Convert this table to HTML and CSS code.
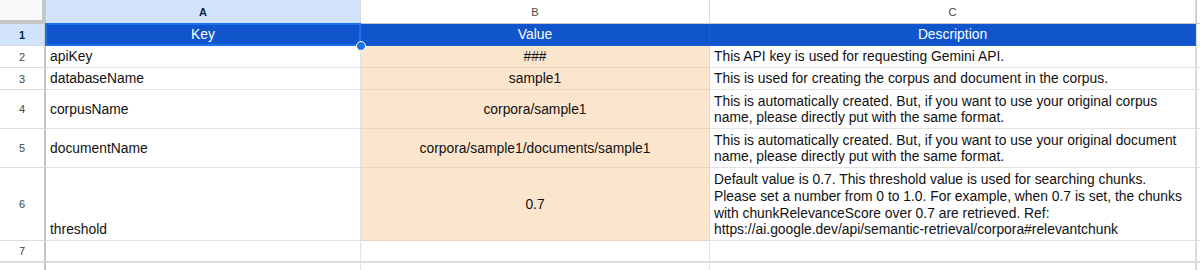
FILE: index.html
```html
<!DOCTYPE html>
<html>
<head>
<meta charset="utf-8">
<link rel="stylesheet" href="styles.css">
</head>
<body>
<div class="sheet">
  <div class="corner"></div>
  <div class="colhead sel">A</div>
  <div class="colhead">B</div>
  <div class="colhead">C</div>
  <div class="colhead edge"></div>

  <div class="rowhead sel">1</div>
  <div class="cell hdr a1">Key<span class="selbox"></span><span class="handle"></span></div>
  <div class="cell hdr">Value</div>
  <div class="cell hdr">Description</div>
  <div class="cell edge"></div>

  <div class="rowhead">2</div>
  <div class="cell mid">apiKey</div>
  <div class="cell val">###</div>
  <div class="cell">This API key is used for requesting Gemini API.</div>
  <div class="cell edge"></div>

  <div class="rowhead">3</div>
  <div class="cell mid">databaseName</div>
  <div class="cell val">sample1</div>
  <div class="cell">This is used for creating the corpus and document in the corpus.</div>
  <div class="cell edge"></div>

  <div class="rowhead">4</div>
  <div class="cell mid">corpusName</div>
  <div class="cell val">corpora/sample1</div>
  <div class="cell">This is automatically created. But, if you want to use your original corpus name, please directly put with the same format.</div>
  <div class="cell edge"></div>

  <div class="rowhead">5</div>
  <div class="cell mid">documentName</div>
  <div class="cell val">corpora/sample1/documents/sample1</div>
  <div class="cell">This is automatically created. But, if you want to use your original document name, please directly put with the same format.</div>
  <div class="cell edge"></div>

  <div class="rowhead">6</div>
  <div class="cell">threshold</div>
  <div class="cell val">0.7</div>
  <div class="cell">Default value is 0.7. This threshold value is used for searching chunks. Please set a number from 0 to 1.0. For example, when 0.7 is set, the chunks with chunkRelevanceScore over 0.7 are retrieved. Ref: https://ai.google.dev/api/semantic-retrieval/corpora#relevantchunk</div>
  <div class="cell edge"></div>

  <div class="rowhead last">7</div>
  <div class="cell last"></div>
  <div class="cell last"></div>
  <div class="cell last"></div>
  <div class="cell edge last"></div>

  <div class="rowhead tail"></div>
  <div class="cell tail"></div>
  <div class="cell tail"></div>
  <div class="cell tail"></div>
  <div class="cell edge tail"></div>
</div>
</body>
</html>
```

FILE: styles.css
```css
html, body {
  margin: 0;
  padding: 0;
  background: #ffffff;
}

.sheet {
  width: 1200px;
  height: 270px;
  display: grid;
  grid-template-columns: 46px 315px 349px 486px 4px;
  grid-template-rows: 24px 22px 22px 22px 39px 39px 73px 22px 7px;
  font-family: "Liberation Sans", Arial, sans-serif;
  font-size: 13.85px;
  color: #111111;
  overflow: hidden;
}

.corner {
  background: #f8f9fa;
  border-right: 4px solid #c4c7c5;
  border-bottom: 4px solid #c4c7c5;
}

.colhead {
  box-sizing: border-box;
  display: flex;
  align-items: center;
  justify-content: center;
  font-size: 11px;
  color: #444746;
  background: #ffffff;
  border-right: 1px solid #dadce0;
  border-bottom: 1px solid #c4c7c5;
}

.colhead.sel {
  background: #d3e3fd;
  color: #0b1f4a;
  font-weight: bold;
}

.colhead.edge {
  border-right: none;
  border-left: 1px solid #c4c7c5;
}

.rowhead {
  box-sizing: border-box;
  display: flex;
  align-items: center;
  justify-content: center;
  font-size: 11px;
  color: #444746;
  background: #ffffff;
  border-right: 2px solid #c4c7c5;
  border-bottom: 1px solid #dadce0;
}

.rowhead.sel {
  background: #d3e3fd;
  color: #0b1f4a;
  font-weight: bold;
}

.cell {
  box-sizing: border-box;
  border-right: 1px solid #e2e2e2;
  border-bottom: 1px solid #e2e2e2;
  padding: 0 7px 2px 4px;
  line-height: 16.7px;
  display: flex;
  flex-direction: column;
  justify-content: flex-end;
  overflow: hidden;
  position: relative;
}

.cell.mid {
  justify-content: center;
  padding-bottom: 0;
}

.cell.hdr {
  background: #1155cc;
  color: #ffffff;
  text-align: center;
  justify-content: center;
  border-right-color: #1a5fd6;
  border-bottom-color: #1a5fd6;
  padding: 0 4px;
}

.cell.val {
  background: #fce5cd;
  text-align: center;
  justify-content: center;
  border-right-color: #ecd3b9;
  border-bottom-color: #ecd3b9;
  padding: 0 4px;
}

.cell.edge {
  border-right: none;
  border-left: 1px solid #d5d5d5;
  padding: 0;
}

.rowhead.last,
.cell.last {
  border-bottom: 2px solid #dcdcdc;
}

.rowhead.tail,
.cell.tail {
  border-bottom: none;
}

.selbox {
  position: absolute;
  left: -1px;
  top: -1px;
  right: -1px;
  bottom: -1px;
  border: 2px solid #1a73e8;
  pointer-events: none;
}

.handle {
  position: absolute;
  right: -6px;
  bottom: -6px;
  width: 8px;
  height: 8px;
  border-radius: 50%;
  background: #1a73e8;
  border: 1.5px solid #ffffff;
  z-index: 2;
}

.a1 {
  overflow: visible;
  z-index: 3;
}
```
